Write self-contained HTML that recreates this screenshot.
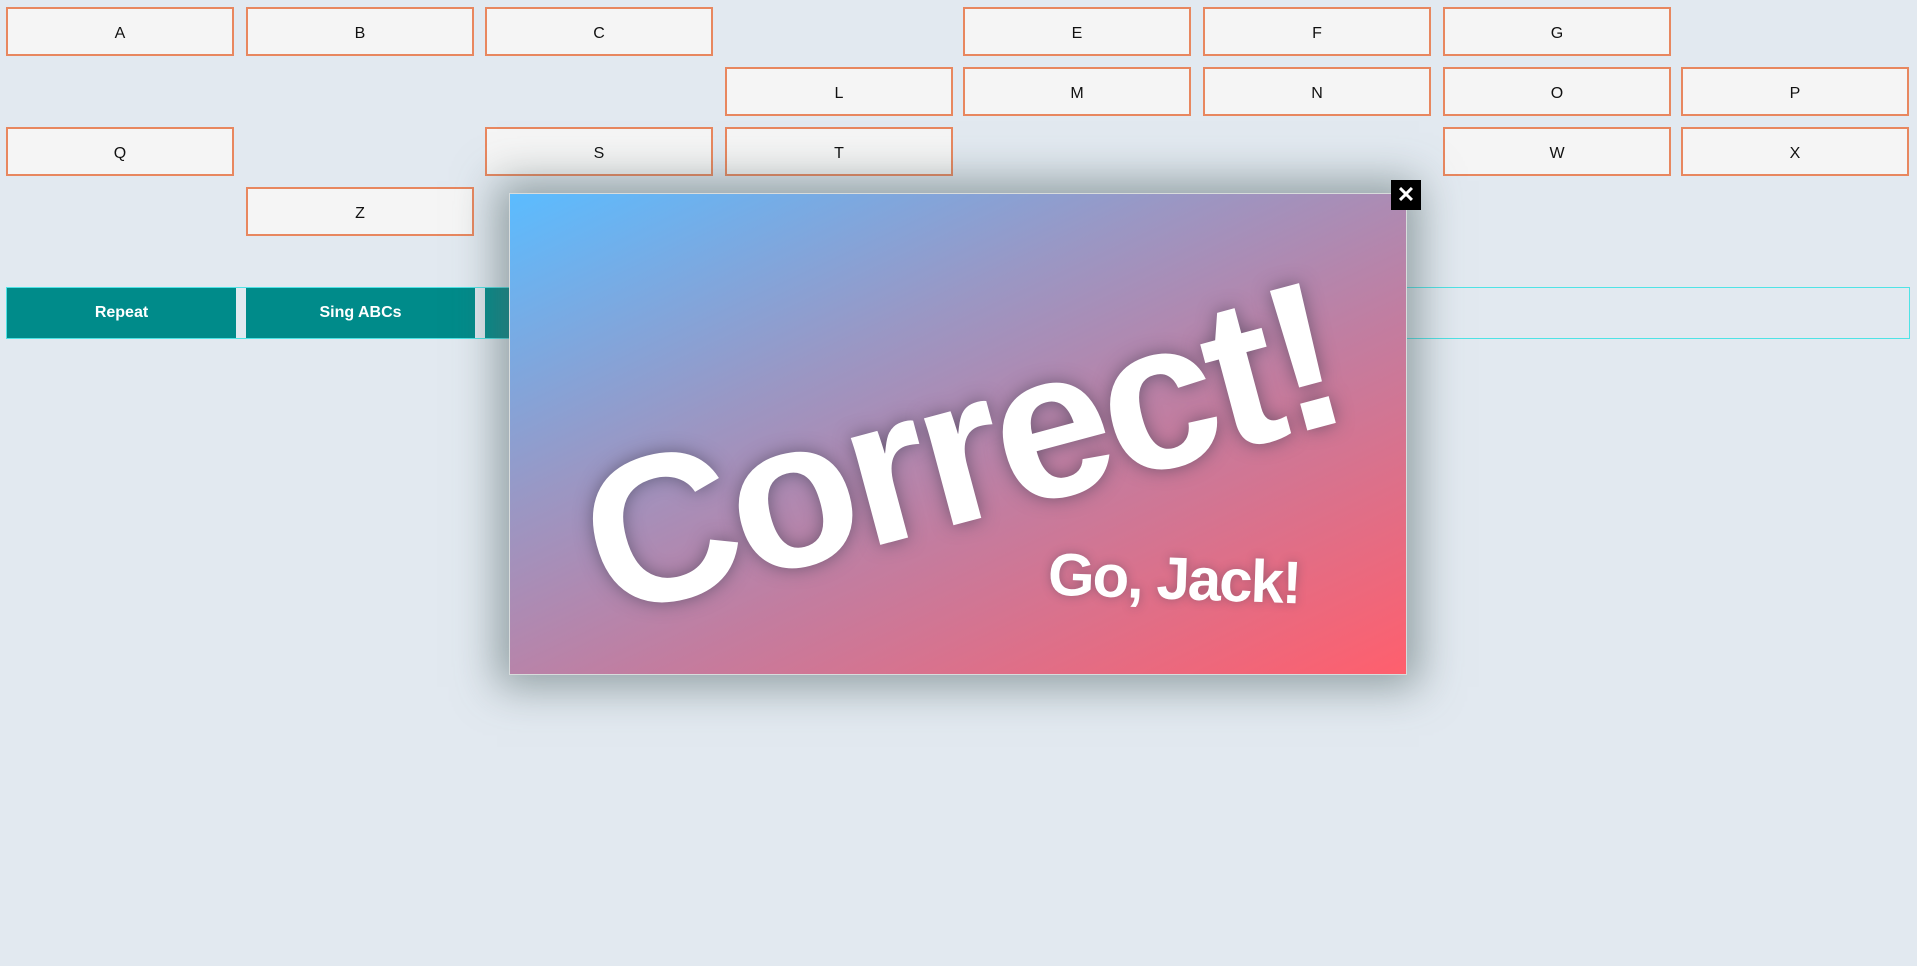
<!DOCTYPE html>
<html><head><meta charset="utf-8"><style>
html,body{margin:0;padding:0;width:1917px;height:966px;overflow:hidden;background:#e2e9f0;font-family:"Liberation Sans",sans-serif;position:relative}
.b{position:absolute;width:224px;border:2px solid #e8875f;background:#f5f5f5;display:flex;align-items:center;justify-content:center;font-size:16px;color:#111;padding-top:4px;box-sizing:content-box;height:41px}
.bar{position:absolute;left:6px;top:287px;width:1902px;height:50px;border:1px solid #4fe3e6;}
.t{position:absolute;top:288px;height:50px;background:#008b8a;color:#fff;font-weight:bold;font-size:16px;display:flex;align-items:center;justify-content:center}
.modal{position:absolute;left:509px;top:193px;width:896px;height:480px;border:1px solid #d8dcdc;background:linear-gradient(155deg,#5bbcff 0%,#9a97c4 35%,#c27da0 60%,#ff5f6d 100%);box-shadow:0 0 40px 12px rgba(80,100,100,.55);overflow:hidden}
.close{position:absolute;left:1391px;top:180px;width:30px;height:30px;background:#000;color:#fff;font-weight:bold;font-size:22px;display:flex;align-items:center;justify-content:center}
.c1{position:absolute;left:30px;top:150px;width:840px;text-align:center;font-size:210px;font-weight:bold;color:#fff;transform:rotate(-15deg);text-shadow:0 0 18px rgba(60,60,80,.6);letter-spacing:-6px;line-height:1}
.c2{position:absolute;left:538px;top:350px;font-size:60px;color:#fff;font-weight:bold;letter-spacing:-2px;transform:rotate(2deg);text-shadow:0 0 10px rgba(60,60,80,.4)}
</style></head><body>
<div class="b" style="left:6px;top:7px">A</div>
<div class="b" style="left:246px;top:7px">B</div>
<div class="b" style="left:485px;top:7px">C</div>
<div class="b" style="left:963px;top:7px">E</div>
<div class="b" style="left:1203px;top:7px">F</div>
<div class="b" style="left:1443px;top:7px">G</div>
<div class="b" style="left:725px;top:67px">L</div>
<div class="b" style="left:963px;top:67px">M</div>
<div class="b" style="left:1203px;top:67px">N</div>
<div class="b" style="left:1443px;top:67px">O</div>
<div class="b" style="left:1681px;top:67px">P</div>
<div class="b" style="left:6px;top:127px">Q</div>
<div class="b" style="left:485px;top:127px">S</div>
<div class="b" style="left:725px;top:127px">T</div>
<div class="b" style="left:1443px;top:127px">W</div>
<div class="b" style="left:1681px;top:127px">X</div>
<div class="b" style="left:246px;top:187px">Z</div>
<div class="bar"></div>
<div class="t" style="left:7px;width:229px">Repeat</div>
<div class="t" style="left:246px;width:229px">Sing ABCs</div>
<div class="t" style="left:485px;width:229px"></div>
<div class="modal"><div class="c1">Correct!</div><div class="c2">Go, Jack!</div></div>
<div class="close">✕</div>
</body></html>
